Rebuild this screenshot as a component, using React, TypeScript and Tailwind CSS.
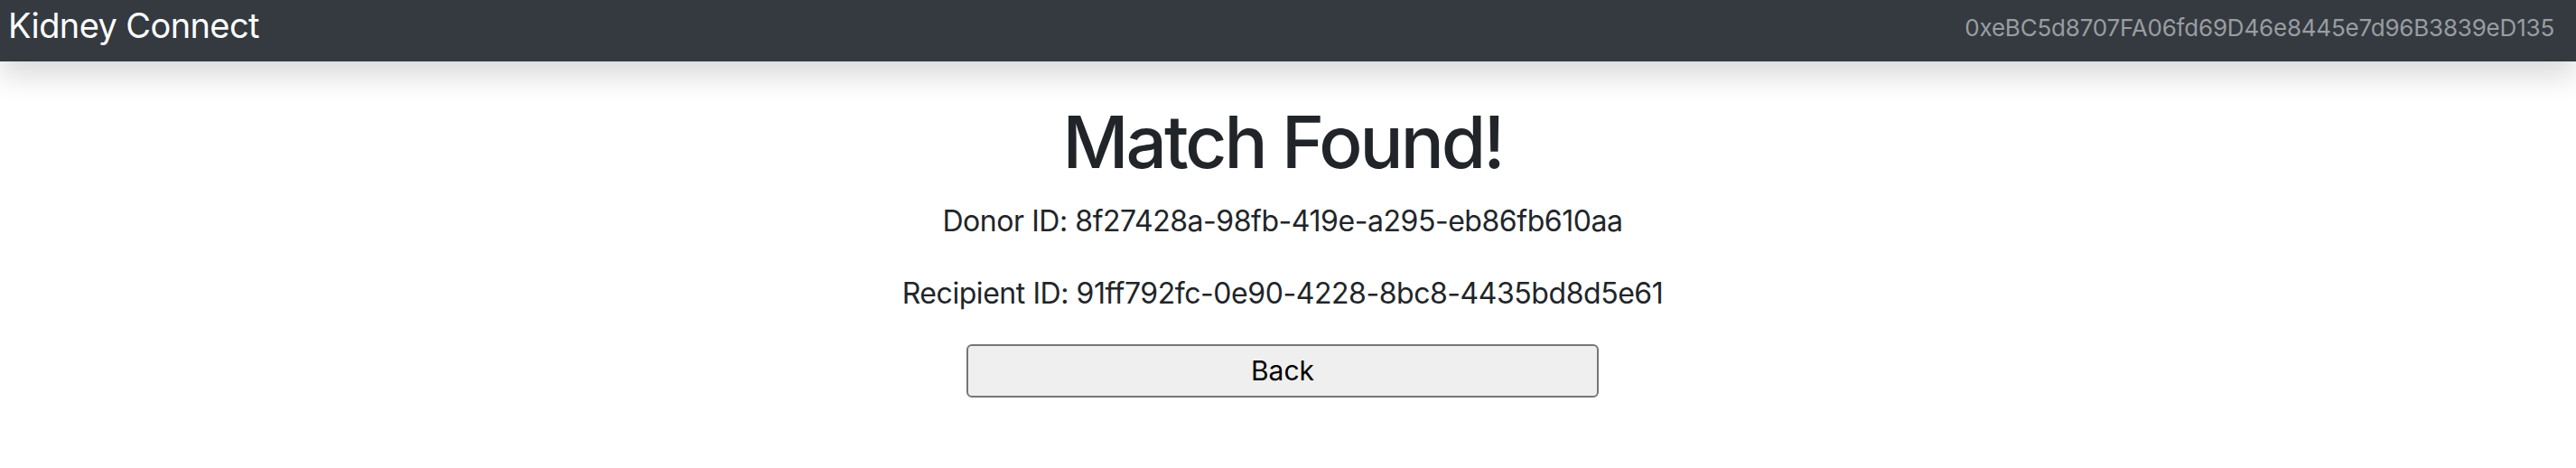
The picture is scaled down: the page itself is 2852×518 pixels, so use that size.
export default function App() {
  const donorId = '8f27428a-98fb-419e-a295-eb86fb610aa';
  const recipientId = '91ff792fc-0e90-4228-8bc8-4435bd8d5e61';
  const account = '0xeBC5d8707FA06fd69D46e8445e7d96B3839eD135';

  return (
    <div className="min-h-screen bg-white font-['Inter','Liberation_Sans',sans-serif] text-[#212529]">
      {/* Navbar */}
      <nav className="relative z-10 flex h-[68px] items-start justify-between bg-[#343a40] pl-[9px] pr-[24px] shadow-[0_16px_32px_rgba(0,0,0,0.15)]">
        <span className="pt-[5px] text-[38px] leading-[46px] tracking-[-0.6px] text-white">Kidney Connect</span>
        <span className="pt-[15px] text-[26px] leading-[32px] tracking-[-0.2px] text-[#9a9da0]">{account}</span>
      </nav>

      {/* Match result */}
      <main className="mr-[12px] flex flex-col items-center pt-[41px] text-center">
        <h1 className="mb-[16px] text-[80px] font-medium leading-[96px] tracking-[-3px]">Match Found!</h1>
        <p className="mb-[32px] text-[32px] leading-[48px] tracking-[-0.45px]">Donor ID: {donorId}</p>
        <p className="mb-[32px] text-[32px] leading-[48px] tracking-[-0.45px]">Recipient ID: {recipientId}</p>
        <button className="h-[59px] w-[700px] rounded-[6px] border-2 border-[#767676] bg-[#efefef] text-[30px] text-black">
          Back
        </button>
      </main>
    </div>
  );
}
